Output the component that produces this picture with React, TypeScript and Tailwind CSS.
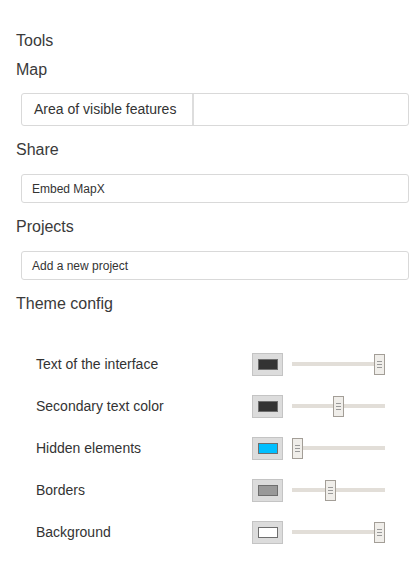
import React from 'react';

interface ThemeItem {
  label: string;
  colour: string;
  value: number;
}

const themeItems: ThemeItem[] = [
  { label: 'Text of the interface', colour: '#333333', value: 1 },
  { label: 'Secondary text color', colour: '#333333', value: 0.5 },
  { label: 'Hidden elements', colour: '#00bfff', value: 0 },
  { label: 'Borders', colour: '#999999', value: 0.4 },
  { label: 'Background', colour: '#ffffff', value: 1 },
];

const Heading = ({ children, className }: { children: React.ReactNode; className?: string }) => (
  <div className={`h-[22px] text-[16px] leading-[22px] text-[#3a3a3a] ${className ?? ''}`}>{children}</div>
);

const SliderRow = ({ item }: { item: ThemeItem }) => (
  <div className="flex h-[42px] items-center">
    <span className="w-[236px] shrink-0 pl-[20px] text-[14px] text-[#333]">{item.label}</span>
    <div className="flex h-[23px] w-[31px] shrink-0 items-center justify-center border border-[#c4c4c4] bg-[#dcdcdc]">
      <div className="h-[11px] w-[20px] border border-[#6e6e6e]" style={{ backgroundColor: item.colour }} />
    </div>
    <div className="relative ml-[9px] h-[21px] w-[93px] shrink-0">
      <div className="absolute left-0 right-0 top-[8px] h-[4px] bg-[#e2ded8]" />
      <div
        className="absolute top-0 flex h-[21px] w-[11px] flex-col items-center justify-center gap-[2px] border border-[#a39e97] bg-[#f0eeea]"
        style={{ left: `${item.value * 82}px` }}
      >
        <span className="h-px w-[5px] bg-[#999]" />
        <span className="h-px w-[5px] bg-[#999]" />
        <span className="h-px w-[5px] bg-[#999]" />
      </div>
    </div>
  </div>
);

export default function App() {
  return (
    <div className="min-h-screen bg-white pl-4 pr-[9px] pt-[30px] font-['Liberation_Sans',Arial,sans-serif]">
      <Heading>Tools</Heading>
      <Heading className="mt-[7px]">Map</Heading>
      <div className="ml-[5px] mt-[12px] flex h-[33px] rounded-[3px] border border-[#d9d9d9]">
        <div className="flex w-[172px] items-center border-r-2 border-[#ddd] pl-[12px] text-[14px] text-[#333]">
          Area of visible features
        </div>
        <div className="flex-1" />
      </div>
      <Heading className="mt-[13px]">Share</Heading>
      <div className="ml-[5px] mt-[13px] flex h-[29px] items-center rounded-[3px] border border-[#d9d9d9] pl-[10px] text-[12px] text-[#333]">
        Embed MapX
      </div>
      <Heading className="mt-[13px]">Projects</Heading>
      <div className="ml-[5px] mt-[13px] flex h-[29px] items-center rounded-[3px] border border-[#d9d9d9] pl-[10px] text-[12px] text-[#333]">
        Add a new project
      </div>
      <Heading className="mt-[13px]">Theme config</Heading>
      <div className="mt-[28px]">
        {themeItems.map((item) => (
          <SliderRow key={item.label} item={item} />
        ))}
      </div>
    </div>
  );
}
